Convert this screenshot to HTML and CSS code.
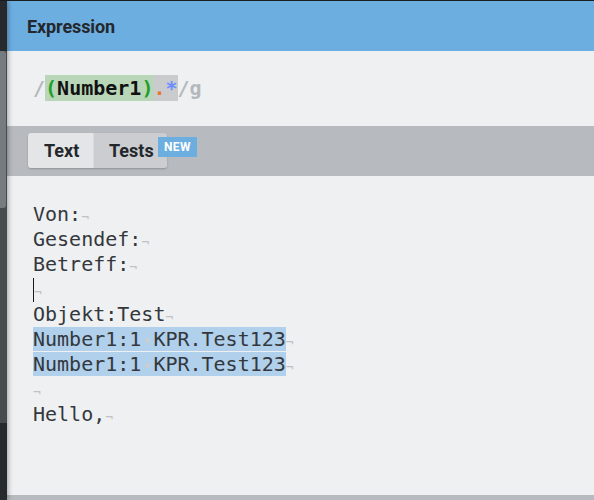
FILE: index.html
```html
<!DOCTYPE html>
<html>
<head>
<meta charset="utf-8">
<link rel="stylesheet" href="styles.css">
</head>
<body>
<div class="app">
  <div class="sidebar">
    <div class="track"><div class="thumb"></div></div>
  </div>
  <div class="panel">
    <div class="header">Expression</div>
    <div class="expr"><span class="re-slash">/</span><span class="re-group"><span class="re-paren">(</span>Number1<span class="re-paren">)</span></span><span class="re-any"><span class="re-dot">.</span><span class="re-star">*</span></span><span class="re-slash">/g</span></div>
    <div class="tabs">
      <div class="tabgroup">
        <div class="tab active">Text</div>
        <div class="tab">Tests<span class="badge">NEW</span></div>
      </div>
    </div>
    <div class="editor">
      <div class="line">Von:<span class="eol">¬</span></div>
      <div class="line">Gesendef:<span class="eol">¬</span></div>
      <div class="line">Betreff:<span class="eol">¬</span></div>
      <div class="line"><span class="cursor"></span><span class="eol">¬</span></div>
      <div class="line">Objekt:Test<span class="eol">¬</span></div>
      <div class="line"><span class="match">Number1:1<span class="ws"></span>KPR.Test123</span><span class="eol">¬</span></div>
      <div class="line"><span class="match">Number1:1<span class="ws"></span>KPR.Test123</span><span class="eol">¬</span></div>
      <div class="line"><span class="eol">¬</span></div>
      <div class="line">Hello,<span class="eol">¬</span></div>
    </div>
  </div>
</div>
</body>
</html>
```
FILE: styles.css
```css
html, body {
  margin: 0;
  padding: 0;
}
body {
  background: #1c1f21;
  padding-top: 1px;
  height: 499px;
  overflow: hidden;
}
.app {
  display: flex;
  height: 499px;
}
.sidebar {
  width: 7px;
  flex: none;
  background: #262a2d;
  padding-top: 50px;
  position: relative;
  z-index: 2;
  box-shadow: 1px 0 5px rgba(0, 0, 0, 0.35);
}
.track {
  height: 372px;
  background: #474b4e;
}
.thumb {
  width: 6px;
  height: 157px;
  background: #767b7f;
  border-radius: 0 3px 3px 0;
}
.panel {
  flex: 1;
  display: flex;
  flex-direction: column;
  background: #eff0f2;
}
.header {
  height: 50px;
  flex: none;
  background: #6daee0;
  padding-left: 20px;
  display: flex;
  align-items: center;
  font-family: Roboto, "Liberation Sans", sans-serif;
  font-weight: 700;
  font-size: 18px;
  letter-spacing: -0.1px;
  color: #23282c;
}
.expr {
  height: 75px;
  flex: none;
  box-sizing: border-box;
  padding: 24px 0 0 26px;
  font-family: "DejaVu Sans Mono", monospace;
  font-weight: 700;
  font-size: 20px;
  line-height: 26px;
  color: #111;
}
.expr > span {
  display: inline-block;
  height: 26px;
  vertical-align: top;
}
.re-slash { color: #b4b8bc; }
.re-group { background: #b9d6b9; }
.re-paren { color: #1f9e29; }
.re-any { background: #c9cbcd; }
.re-dot { color: #e5782a; }
.re-star { color: #6c8dff; }
.tabs {
  height: 50px;
  flex: none;
  box-sizing: border-box;
  background: #b7bbbf;
  padding: 7px 21px;
}
.tabgroup {
  display: inline-flex;
  height: 35px;
  border-radius: 3px;
  box-shadow: 0 1px 2px rgba(0, 0, 0, 0.22);
}
.tab {
  position: relative;
  display: flex;
  align-items: center;
  justify-content: flex-start;
  font-family: Roboto, "Liberation Sans", sans-serif;
  font-weight: 700;
  font-size: 18px;
  color: #23272b;
  background: #cbcdd0;
  width: 74px;
  border-radius: 0 3px 3px 0;
  border-left: 1px solid #d9dadc;
  box-sizing: border-box;
  padding-left: 15px;
}
.tab.active {
  width: 65px;
  background: #e4e5e7;
  border-radius: 3px 0 0 3px;
  border-left: 0;
  padding-left: 16px;
}
.badge {
  position: absolute;
  left: 64px;
  top: 4px;
  width: 39px;
  height: 20px;
  background: #6daee0;
  color: #fff;
  font-size: 12px;
  font-weight: 700;
  letter-spacing: 0.5px;
  display: flex;
  align-items: center;
  justify-content: center;
}
.editor {
  flex: 1;
  padding: 26px 25px 0 26px;
  font-family: "DejaVu Sans Mono", monospace;
  font-size: 20px;
  line-height: 25px;
  color: #34383c;
  border-bottom: 5px solid #b7bbbf;
}
.line {
  height: 25px;
  white-space: pre;
}
.eol {
  font-size: 13px;
  color: #bfc2c5;
}
.match {
  background: #b0d0ec;
}
.ws {
  display: inline-flex;
  justify-content: center;
  width: 12px;
  height: 5px;
  vertical-align: 3px;
}
.ws::after {
  content: "";
  width: 5px;
  height: 5px;
  border-radius: 50%;
  background: #c6ced6;
}
.cursor {
  display: inline-block;
  width: 1px;
  height: 24px;
  background: #1a1a1a;
  vertical-align: -6px;
}
```
